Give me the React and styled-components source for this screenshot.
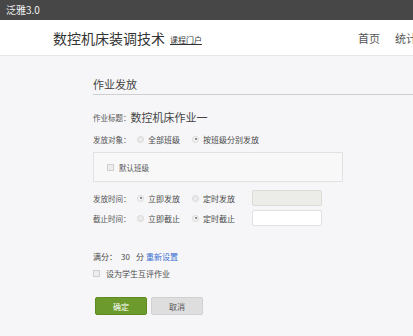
import React from "react";
import styled, { createGlobalStyle } from "styled-components";

const GlobalStyle = createGlobalStyle`
  html, body { margin: 0; padding: 0; }
  body {
    background: #f6f6f8;
    font-family: "Noto Sans CJK SC", "Noto Sans", sans-serif;
    color: #555;
    width: 413px;
    height: 336px;
    overflow: hidden;
  }
`;

/* ===== TOP BAR ===== */
const TopBar = styled.div`
  height: 20px;
  background: #474747;
  color: #f2f2f2;
  font-size: 10px;
  line-height: 20px;
  padding-left: 6px;
`;

/* ===== HEADER ===== */
const Header = styled.header`
  height: 35px;
  background: #fff;
  border-bottom: 1px solid #e6e6e8;
  display: flex;
  align-items: center;
  padding-left: 53px;
  white-space: nowrap;
  overflow: hidden;
`;

const CourseTitle = styled.h1`
  margin: 0;
  font-size: 14px;
  font-weight: 400;
  color: #333;
  line-height: 18px;
`;

const PortalLink = styled.a`
  font-size: 8px;
  color: #333;
  text-decoration: underline;
  margin-left: 5px;
  margin-top: 3px;
`;

const Nav = styled.nav`
  margin-left: auto;
  margin-right: -4px;
  flex-shrink: 0;
  display: flex;
  gap: 15px;
`;

const NavItem = styled.span`
  font-size: 11px;
  color: #555;
`;

/* ===== MAIN ===== */
const Main = styled.main`
  padding-left: 93px;
`;

const SectionTitle = styled.h2`
  margin: 0;
  padding-top: 21px;
  padding-bottom: 3px;
  font-size: 11px;
  line-height: 14px;
  font-weight: 400;
  color: #444;
  border-bottom: 1px solid #cfcfd2;
`;

const Row = styled.div`
  display: flex;
  align-items: center;
  height: ${p => p.$h || 12}px;
  margin-top: ${p => p.$mt || 0}px;
  font-size: 8px;
  color: #4a4a4a;
  white-space: nowrap;
`;

const Label = styled.span`
  width: ${p => p.$auto ? "auto" : "40px"};
  font-size: 7.5px;
  color: #555;
`;

const HomeworkName = styled.span`
  font-size: 11px;
  color: #444;
`;

const Option = styled.label`
  display: flex;
  align-items: center;
  flex-shrink: 0;
  width: 55px;
  margin-left: ${p => (p.$first ? 4 : 0)}px;
  gap: 4px;
`;

const Radio = styled.span`
  position: relative;
  flex-shrink: 0;
  width: 7px;
  height: 7px;
  box-sizing: border-box;
  border-radius: 50%;
  border: 1px solid #d8d8d8;
  background: ${p => (p.$on ? "#f4f4f4" : "#ebebeb")};

  &::after {
    content: "";
    display: ${p => (p.$on ? "block" : "none")};
    position: absolute;
    left: 1.5px;
    top: 1.5px;
    width: 2px;
    height: 2px;
    border-radius: 50%;
    background: #6a6a6a;
  }
`;

const Check = styled.span`
  flex-shrink: 0;
  width: 7px;
  height: 7px;
  box-sizing: border-box;
  border: 1px solid #cfcfcf;
  background: #ededed;
  margin-right: ${p => p.$gap || 5}px;
`;

const ClassBox = styled.div`
  width: 250px;
  height: 30px;
  box-sizing: border-box;
  margin-top: 7px;
  border: 1px solid #e2e2e4;
  background: #f8f8f9;
  display: flex;
  align-items: center;
  padding-left: 13px;
  font-size: 7.5px;
  color: #555;
`;

const DateInput = styled.div`
  width: 70px;
  height: 16px;
  box-sizing: border-box;
  margin-left: 5px;
  border: 1px solid ${p => (p.$disabled ? "#dcdcd6" : "#e0e0e0")};
  background: ${p => (p.$disabled ? "#ecece8" : "#fff")};
  border-radius: 2px;
`;

const Score = styled.span`
  margin: 0 6px 0 ${p => p.$ml || 0}px;
`;

const ResetLink = styled.a`
  color: #3b6fd0;
  margin-left: 2px;
`;

const Buttons = styled.div`
  display: flex;
  gap: 4px;
  margin-top: 18px;
  margin-left: 2px;
`;

const Button = styled.button`
  width: 52px;
  height: 18px;
  border-radius: 2px;
  font-family: inherit;
  font-size: 8px;
  padding: 0;
  border: 1px solid ${p => (p.$primary ? "#5e8a22" : "#d0d0d0")};
  background: ${p => (p.$primary ? "#6c9a2c" : "#dedede")};
  color: ${p => (p.$primary ? "#fff" : "#555")};
`;

export default function App() {
  return (
    <>
      <GlobalStyle />
      <TopBar>泛雅3.0</TopBar>
      <Header>
        <CourseTitle>数控机床装调技术</CourseTitle>
        <PortalLink>课程门户</PortalLink>
        <Nav>
          <NavItem>首页</NavItem>
          <NavItem>统计</NavItem>
        </Nav>
      </Header>
      <Main>
        <SectionTitle>作业发放</SectionTitle>

        <Row $h={14} $mt={15}>
          <Label $auto>作业标题：</Label>
          <HomeworkName>数控机床作业一</HomeworkName>
        </Row>

        <Row $mt={9}>
          <Label>发放对象：</Label>
          <Option $first><Radio />全部班级</Option>
          <Option><Radio $on />按班级分别发放</Option>
        </Row>

        <ClassBox>
          <Check />默认班级
        </ClassBox>

        <Row $h={16} $mt={8}>
          <Label>发放时间：</Label>
          <Option $first><Radio $on />立即发放</Option>
          <Option><Radio />定时发放</Option>
          <DateInput $disabled />
        </Row>

        <Row $h={16} $mt={4}>
          <Label>截止时间：</Label>
          <Option $first><Radio />立即截止</Option>
          <Option><Radio $on />定时截止</Option>
          <DateInput />
        </Row>

        <Row $mt={24}>
          <span>满分：</span>
          <Score $ml={4}>30</Score>
          <span>分</span>
          <ResetLink>重新设置</ResetLink>
        </Row>

        <Row $mt={5}>
          <Check $gap={6} />设为学生互评作业
        </Row>

        <Buttons>
          <Button $primary>确定</Button>
          <Button>取消</Button>
        </Buttons>
      </Main>
    </>
  );
}
